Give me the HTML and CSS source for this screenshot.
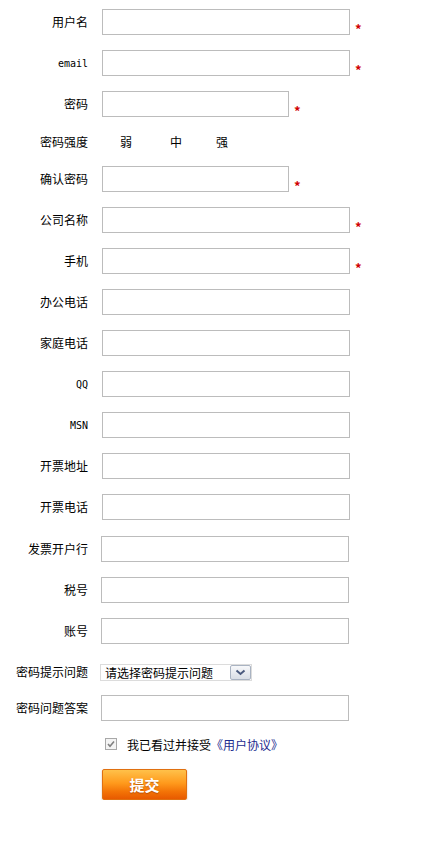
FILE: index.html
```html
<!DOCTYPE html>
<html lang="zh-CN">
<head>
<meta charset="utf-8">
<title>注册</title>
<link rel="stylesheet" href="styles.css">
</head>
<body>
<form class="form">
  <div class="row"><label class="label">用户名</label><span class="input"></span><span class="req">*</span></div>
  <div class="row"><label class="label"><span class="latin">email</span></label><span class="input"></span><span class="req">*</span></div>
  <div class="row"><label class="label">密码</label><span class="input short"></span><span class="req">*</span></div>
  <div class="row strength-row"><label class="label">密码强度</label><div class="strength"><span>弱</span><span>中</span><span>强</span></div></div>
  <div class="row"><label class="label">确认密码</label><span class="input short"></span><span class="req">*</span></div>
  <div class="row"><label class="label">公司名称</label><span class="input"></span><span class="req">*</span></div>
  <div class="row"><label class="label">手机</label><span class="input"></span><span class="req">*</span></div>
  <div class="row"><label class="label">办公电话</label><span class="input"></span></div>
  <div class="row"><label class="label">家庭电话</label><span class="input"></span></div>
  <div class="row"><label class="label"><span class="latin">QQ</span></label><span class="input"></span></div>
  <div class="row"><label class="label"><span class="latin">MSN</span></label><span class="input"></span></div>
  <div class="row"><label class="label">开票地址</label><span class="input"></span></div>
  <div class="row"><label class="label">开票电话</label><span class="input"></span></div>
  <div class="row shifted"><label class="label">发票开户行</label><span class="input"></span></div>
  <div class="row shifted-b"><label class="label">税号</label><span class="input"></span></div>
  <div class="row shifted-b"><label class="label">账号</label><span class="input"></span></div>
  <div class="row"><label class="label">密码提示问题</label>
    <div class="select"><span class="select-text">请选择密码提示问题</span><span class="select-btn"><svg width="11" height="7" viewBox="0 0 11 7"><path d="M1.5 1.5 L5.5 5 L9.5 1.5" fill="none" stroke="#4a5a7e" stroke-width="2"/></svg></span></div>
  </div>
  <div class="row answer-row shifted-b"><label class="label">密码问题答案</label><span class="input"></span></div>
  <div class="agree">
    <span class="check"><svg width="12" height="12" viewBox="0 0 12 12"><rect x="0.5" y="0.5" width="11" height="11" fill="#f4f4f4" stroke="#a8a8a8"/><path d="M3 6 L5 8.2 L9 3.5" fill="none" stroke="#808080" stroke-width="1.6"/></svg></span>
    <span>我已看过并接受<a class="link">《用户协议》</a></span>
  </div>
  <div class="btn-row"><span class="btn">提交</span></div>
</form>
</body>
</html>
```
FILE: styles.css
```css
html, body {
  margin: 0;
  padding: 0;
  background: #fff;
}
body {
  font-family: "Noto Sans CJK SC", "Noto Sans", sans-serif;
  font-size: 12px;
  color: #000;
}
.form {
  display: flex;
  flex-direction: column;
  gap: 15px;
  padding-top: 9px;
}
.row {
  display: flex;
  align-items: center;
  height: 26px;
}
.label {
  width: 102px;
  box-sizing: border-box;
  padding-right: 14px;
  text-align: right;
  flex-shrink: 0;
  line-height: 16px;
}
.latin {
  font-family: "DejaVu Sans Mono", monospace;
  font-size: 10px;
}
.input {
  display: block;
  width: 248px;
  height: 26px;
  box-sizing: border-box;
  border: 1px solid #bcbcbc;
  background: #fff;
}
.input.short {
  width: 187px;
}
.req {
  align-self: flex-start;
  margin-top: 14px;
  margin-left: 5px;
  line-height: 12px;
  font-size: 13px;
  font-weight: bold;
  color: #d10000;
}
.strength-row {
  height: 19px;
}
.strength {
  display: flex;
  gap: 38px;
  padding-left: 18px;
}
.strength span:last-child {
  margin-left: -4px;
}
.shifted {
  margin-top: 1px;
}
.shifted .input,
.shifted-b .input {
  margin-left: -1px;
}
.select {
  display: flex;
  align-items: center;
  justify-content: space-between;
  margin-left: -2px;
  width: 152px;
  height: 17px;
  box-sizing: border-box;
  border: 1px solid #dcdcdc;
  padding-left: 4px;
}
.select-text {
  line-height: 15px;
}
.select-btn {
  display: flex;
  align-items: center;
  justify-content: center;
  width: 21px;
  height: 15px;
  box-sizing: border-box;
  border: 1px solid #a9b3c2;
  border-radius: 2px;
  background: linear-gradient(#f7f8fa, #d9dee6);
}
.answer-row {
  margin-top: -5px;
}
.agree {
  display: flex;
  align-items: center;
  gap: 10px;
  height: 16px;
  padding-left: 105px;
}
.check {
  display: block;
  width: 12px;
  height: 12px;
}
.check svg {
  display: block;
}
.link {
  color: #1b2a8e;
}
.btn-row {
  margin-top: 2px;
  padding-left: 102px;
}
.btn {
  display: flex;
  align-items: center;
  justify-content: center;
  width: 85px;
  height: 31px;
  box-sizing: border-box;
  border: 1px solid #e07010;
  border-radius: 2px;
  background: linear-gradient(#ffc14a 0%, #ff9a1c 45%, #f37306 75%, #e85a00 100%);
  box-shadow: 0 1px 2px rgba(120, 60, 0, 0.35);
  color: #fff;
  font-size: 15px;
  font-weight: bold;
  text-shadow: 0 1px 1px rgba(150, 60, 0, 0.6);
}
```
